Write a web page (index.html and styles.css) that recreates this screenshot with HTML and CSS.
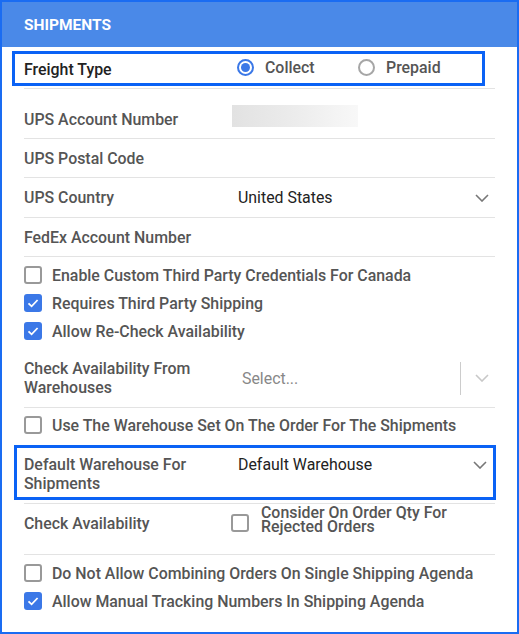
FILE: index.html
```html
<!DOCTYPE html>
<html>
<head>
<meta charset="utf-8">
<link rel="stylesheet" href="styles.css">
</head>
<body>
<div class="panel">
  <div class="header">SHIPMENTS</div>
  <div class="content">
    <div class="row freight">
      <div class="hl hl-freight">
        <div class="label dark">Freight Type</div>
        <div class="radios">
          <span class="radio-item"><span class="radio on"></span><span class="radio-text">Collect</span></span>
          <span class="radio-item"><span class="radio"></span><span class="radio-text">Prepaid</span></span>
        </div>
      </div>
    </div>

    <div class="row field first">
      <div class="label">UPS Account Number</div>
      <div class="value"><span class="skeleton"></span></div>
    </div>
    <div class="row field">
      <div class="label">UPS Postal Code</div>
      <div class="value"></div>
    </div>
    <div class="row field country">
      <div class="label">UPS Country</div>
      <div class="value select"><span class="val-text">United States</span>
        <svg class="chev" width="14" height="8" viewBox="0 0 14 8"><polyline points="1,1 7,7 13,1" fill="none" stroke="#777" stroke-width="1.6"/></svg>
      </div>
    </div>
    <div class="row field">
      <div class="label">FedEx Account Number</div>
      <div class="value"></div>
    </div>

    <div class="checks top-checks">
      <div class="check-item"><span class="cb"></span><span class="cb-text">Enable Custom Third Party Credentials For Canada</span></div>
      <div class="check-item"><span class="cb on"><svg width="18" height="18" viewBox="0 0 18 18"><path d="M4.5 9.3 L7.6 12.3 L13.6 6" fill="none" stroke="#fff" stroke-width="1.8"/></svg></span><span class="cb-text">Requires Third Party Shipping</span></div>
      <div class="check-item"><span class="cb on"><svg width="18" height="18" viewBox="0 0 18 18"><path d="M4.5 9.3 L7.6 12.3 L13.6 6" fill="none" stroke="#fff" stroke-width="1.8"/></svg></span><span class="cb-text">Allow Re-Check Availability</span></div>
    </div>
    <div class="row field two-line warehouses">
      <div class="label">Check Availability From Warehouses</div>
      <div class="value multi">
        <span class="placeholder">Select...</span>
        <span class="divider"></span>
        <svg class="chev" width="14" height="8" viewBox="0 0 14 8"><polyline points="1,1 7,7 13,1" fill="none" stroke="#c8c8c8" stroke-width="1.6"/></svg>
      </div>
    </div>

    <div class="row group-default">
      <div class="check-item"><span class="cb"></span><span class="cb-text">Use The Warehouse Set On The Order For The Shipments</span></div>
      <div class="hl hl-default">
        <div class="label">Default Warehouse For Shipments</div>
        <div class="value select top"><span class="val-text">Default Warehouse</span>
          <svg class="chev" width="14" height="8" viewBox="0 0 14 8"><polyline points="1,1 7,7 13,1" fill="none" stroke="#777" stroke-width="1.6"/></svg>
        </div>
      </div>
    </div>

    <div class="row field check-avail">
      <div class="label">Check Availability</div>
      <div class="value consider"><span class="cb"></span><span class="cb-text tight">Consider On Order Qty For Rejected Orders</span></div>
    </div>

    <div class="checks bottom-checks">
      <div class="check-item"><span class="cb"></span><span class="cb-text">Do Not Allow Combining Orders On Single Shipping Agenda</span></div>
      <div class="check-item"><span class="cb on"><svg width="18" height="18" viewBox="0 0 18 18"><path d="M4.5 9.3 L7.6 12.3 L13.6 6" fill="none" stroke="#fff" stroke-width="1.8"/></svg></span><span class="cb-text">Allow Manual Tracking Numbers In Shipping Agenda</span></div>
    </div>
  </div>
</div>
</body>
</html>
```

FILE: styles.css
```css
* { box-sizing: border-box; }
html, body { margin: 0; padding: 0; background: #fff; }
body { font-family: Roboto, "Liberation Sans", Arial, sans-serif; font-size: 15.9px; }

.panel {
  width: 519px;
  height: 634px;
  border: 2px solid #1a6cf2;
  background: #fff;
  overflow: hidden;
}

.header {
  height: 45px;
  background: #4a89e8;
  color: #fff;
  font-weight: 700;
  font-size: 15.5px;
  padding: 0 0 0 22px;
  display: flex;
  align-items: center;
}

.content { padding: 0 22px; }

.row { border-bottom: 1px solid #e3e3e3; }

.label { color: #555; font-weight: 500; line-height: 19px; }
.label.dark { color: #222; }

.field {
  display: grid;
  grid-template-columns: 214px 1fr;
  align-items: center;
  min-height: 39px;
}
.field.first { padding-top: 11px; min-height: 50px; }
.field.country { min-height: 40px; }

.value { display: flex; align-items: center; color: #222; }
.val-text { flex: 1; }
.select .chev { margin-right: 6px; }

.skeleton {
  display: block;
  width: 126px;
  height: 22px;
  margin-left: -6px;
  margin-bottom: 6px;
  background: linear-gradient(90deg, #e2e2e2 0%, #ececec 50%, #f8f8f8 100%);
}

/* highlighted boxes */
.hl {
  border: 3px solid #0a62f5;
  display: grid;
  grid-template-columns: 214px 1fr;
}
.freight { padding: 4px 0 2px; }
.hl-freight {
  margin: 0 10px 0 -12px;
  padding-left: 9px;
  height: 35px;
  align-items: center;
}
.label.dark { padding-top: 1px; }
.radios { display: flex; align-items: center; margin-top: -3px; }
.radio-item { display: flex; align-items: center; width: 122px; margin-left: -1px; }
.radio {
  width: 17px; height: 17px;
  border-radius: 50%;
  border: 2px solid #a6a6a6;
  display: inline-flex;
  align-items: center;
  justify-content: center;
  margin-right: 11px;
}
.radio.on { border-color: #3b78e7; }
.radio.on::after {
  content: "";
  width: 9px; height: 9px;
  border-radius: 50%;
  background: #3b78e7;
}
.radio-text { color: #555; font-weight: 500; }

/* checkboxes */
.checks { padding-top: 4px; }
.check-item { display: flex; align-items: center; height: 28px; }
.cb {
  width: 18px; height: 18px;
  border: 2px solid #999;
  border-radius: 3px;
  flex: none;
  margin-right: 10px;
  display: inline-flex;
}
.cb.on { border: none; background: #3b78e7; }
.cb-text { color: #555; font-weight: 500; }

.two-line { padding: 14px 0 10px; align-items: center; }
.multi { align-self: center; }
.placeholder { flex: 1; color: #888; padding-left: 4px; }
.divider { width: 1px; height: 33px; background: #ccc; margin-right: 14px; }
.multi .chev { margin-right: 6px; }

.group-default { padding: 3px 0 3px; }
.hl-default {
  margin: 6px -1px 0 -10px;
  padding: 7px 0 3px 7px;
  height: 55px;
  align-items: start;
}
.value.top { align-items: center; height: 19px; }

.check-avail { min-height: 51px; padding: 2px 0 0; align-items: start; }
.check-avail .label { margin-top: 8px; }
.consider { margin-left: -7px; align-items: flex-start; }
.consider .cb { margin-right: 12px; margin-top: 8px; }
.cb-text.tight { line-height: 14px; width: 200px; }

.bottom-checks { padding-top: 4px; }
```
